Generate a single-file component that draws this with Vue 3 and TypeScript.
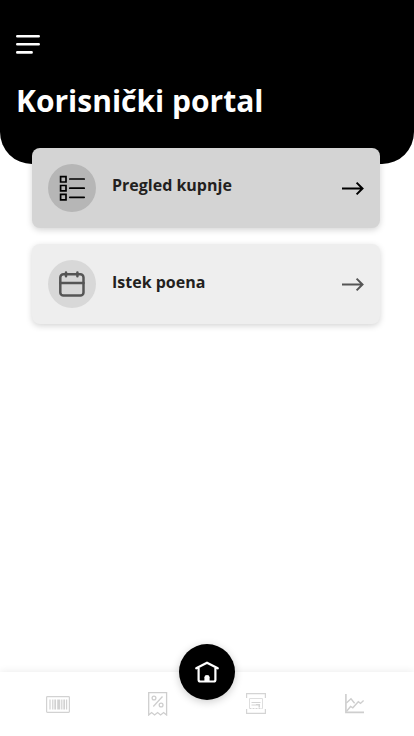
<script setup lang="ts">
interface MenuCard {
  id: 'list' | 'calendar'
  label: string
  active: boolean
}

const cards: MenuCard[] = [
  { id: 'list', label: 'Pregled kupnje', active: true },
  { id: 'calendar', label: 'Istek poena', active: false },
]
</script>

<template>
  <div class="page">
    <header class="header">
      <svg class="burger" width="24" height="20" viewBox="0 0 24 20" stroke="#fff" stroke-width="2.6" stroke-linecap="round">
        <path d="M1.3 1.3H22.7M1.3 9.3H22.7M1.3 17.4H15.6" />
      </svg>
      <h1 class="title">Korisnički portal</h1>
    </header>

    <main class="cards">
      <div v-for="card in cards" :key="card.id" class="card" :class="{ active: card.active }">
        <span class="bubble">
          <svg v-if="card.id === 'list'" width="28" height="28" viewBox="0 0 28 28" fill="none" stroke="currentColor" stroke-width="1.7">
            <path d="M2.6 2.6H8V8H2.6ZM2.6 11.5H8V16.9H2.6ZM2.6 20.4H8V25.8H2.6Z" />
            <path d="M11.8 5H26.2M11.8 14.2H26.2M11.8 23.3H26.2" stroke-linecap="round" />
          </svg>
          <svg v-else width="28" height="28" viewBox="0 0 28 28" fill="none" stroke="currentColor" stroke-width="2.5" stroke-linecap="round">
            <rect x="2.3" y="4.3" width="23.2" height="21.3" rx="3.2" />
            <path d="M2.3 13H25.5M8 2.6V6.3M19.4 2.6V6.3" />
          </svg>
        </span>
        <span class="label">{{ card.label }}</span>
        <svg class="arrow" width="24" height="16" viewBox="0 0 24 16" fill="none" stroke="currentColor" stroke-width="2">
          <path d="M1 8.5H21.8M15.6 2.6L21.5 8.5L15.6 14.4" />
        </svg>
      </div>
    </main>

    <nav class="nav">
      <span class="item barcode">
        <svg width="24" height="17" viewBox="0 0 24 17" fill="none" stroke="#d2d2d2">
          <rect x=".6" y=".6" width="22.8" height="15.8" rx=".8" stroke-width="1.2" />
          <path d="M4 3.5V13.5M6.8 3.5V13.5M15.8 3.5V13.5M20.6 3.5V13.5" stroke-width="1.2" />
          <path d="M9.2 3.5V13.5M18.2 3.5V13.5" stroke-width="1.7" />
          <path d="M12.7 3.5V13.5" stroke-width="3" />
        </svg>
      </span>
      <span class="item coupon">
        <svg width="20" height="24" viewBox="0 0 20 24" fill="none" stroke="#cecece" stroke-width="1.3">
          <path d="M.7 23V.7H18.6V23L15.6 20.5L12.6 23L9.6 20.5L6.6 23L3.6 20.5L.7 23Z" />
          <path d="M14.5 4.5L5.3 14.5" />
          <circle cx="6" cy="6" r="1.9" />
          <circle cx="13.1" cy="13" r="1.9" />
        </svg>
      </span>
      <span class="home">
        <svg width="26" height="24" viewBox="0 0 26 24" fill="none" stroke="#fff" stroke-width="2.2" stroke-linecap="round" stroke-linejoin="round">
          <path d="M2.2 8.3L13 2.7L23.8 8.3M4.6 7.9V19.7Q4.6 21.5 6.4 21.5H19.6Q21.4 21.5 21.4 19.7V7.9" />
          <path d="M10.4 21.5V17.2Q10.4 15 13 15Q15.6 15 15.6 17.2V21.5Z" fill="#fff" stroke="none" />
        </svg>
      </span>
      <span class="item scan">
        <svg width="20" height="21" viewBox="0 0 20 21" fill="none" stroke="#d4d4d4" stroke-width="1">
          <path d="M.6 5V.7H19.4V5M.6 16V20.3H19.4V16" stroke-width="1.2" />
          <path d="M3.5 15.3V5.5H16.5V15.3" stroke="#dedede" />
          <path d="M3.5 15.5H16.5" stroke-dasharray="2 1" />
          <path d="M5.5 9.5H14.5M5.5 12H10" />
          <path d="M10 11H14V14.5H12.5V12.5H10Z" fill="#d4d4d4" stroke="none" />
        </svg>
      </span>
      <span class="item chart">
        <svg width="20" height="20" viewBox="0 0 20 20" fill="none" stroke="#cecece" stroke-width="1.4">
          <path d="M.9 0V18.4H19" stroke-width="1.6" />
          <path d="M1.4 9L6 4.8L9.6 9.2" />
          <path d="M1.6 17.3L5.6 12.5L7.8 13.8L13.3 7.8L15.5 9.4L18.6 6.5" />
        </svg>
      </span>
    </nav>
  </div>
</template>

<style>
body {
  background: #fff;
}
</style>

<style scoped>
.page {
  display: flex;
  flex-direction: column;
  height: 736px;
  overflow: hidden;
  background: #fff;
  font-family: 'Open Sans', 'Noto Sans', sans-serif;
}

.header {
  box-sizing: border-box;
  height: 164px;
  flex: none;
  padding: 35px 16px 0;
  background: #000;
  border-radius: 0 0 32px 32px;
}

.burger {
  display: block;
}

.title {
  margin: 25px 0 0;
  color: #fff;
  font-size: 30px;
  line-height: 41px;
  font-weight: 700;
  white-space: nowrap;
}

.cards {
  display: flex;
  flex: 1;
  flex-direction: column;
  gap: 16px;
  margin: -16px 34px 0 32px;
}

.card {
  box-sizing: border-box;
  display: flex;
  align-items: center;
  height: 80px;
  padding: 0 15px 0 16px;
  color: #555;
  background: #eee;
  border-radius: 8px;
  box-shadow: 0 2px 6px rgba(0, 0, 0, 0.17);
}

.card.active {
  color: #000;
  background: #d4d4d4;
}

.bubble {
  display: flex;
  align-items: center;
  justify-content: center;
  width: 48px;
  height: 48px;
  border-radius: 50%;
  background: #d8d8d8;
}

.active .bubble {
  background: #b6b6b6;
}

.label {
  flex: 1;
  margin: -4px 0 0 16px;
  color: #231f20;
  font-size: 16px;
  line-height: 22px;
  font-weight: 700;
}

.active .label {
  margin-top: -6px;
}

.nav {
  display: flex;
  flex: none;
  align-items: flex-start;
  height: 64px;
  background: #fff;
  box-shadow: 0 0 8px rgba(0, 0, 0, 0.09);
}

.item,
.item svg {
  display: block;
}

.barcode {
  margin: 24px 0 0 46px;
}

.coupon {
  margin: 20px 0 0 78px;
}

.home {
  display: flex;
  align-items: center;
  justify-content: center;
  width: 56px;
  height: 56px;
  margin: -28px 0 0 11px;
  border-radius: 50%;
  background: #000;
  box-shadow: 0 2px 8px rgba(0, 0, 0, 0.2);
}

.scan {
  margin: 21px 0 0 11px;
}

.chart {
  margin: 22px 0 0 79px;
}
</style>
